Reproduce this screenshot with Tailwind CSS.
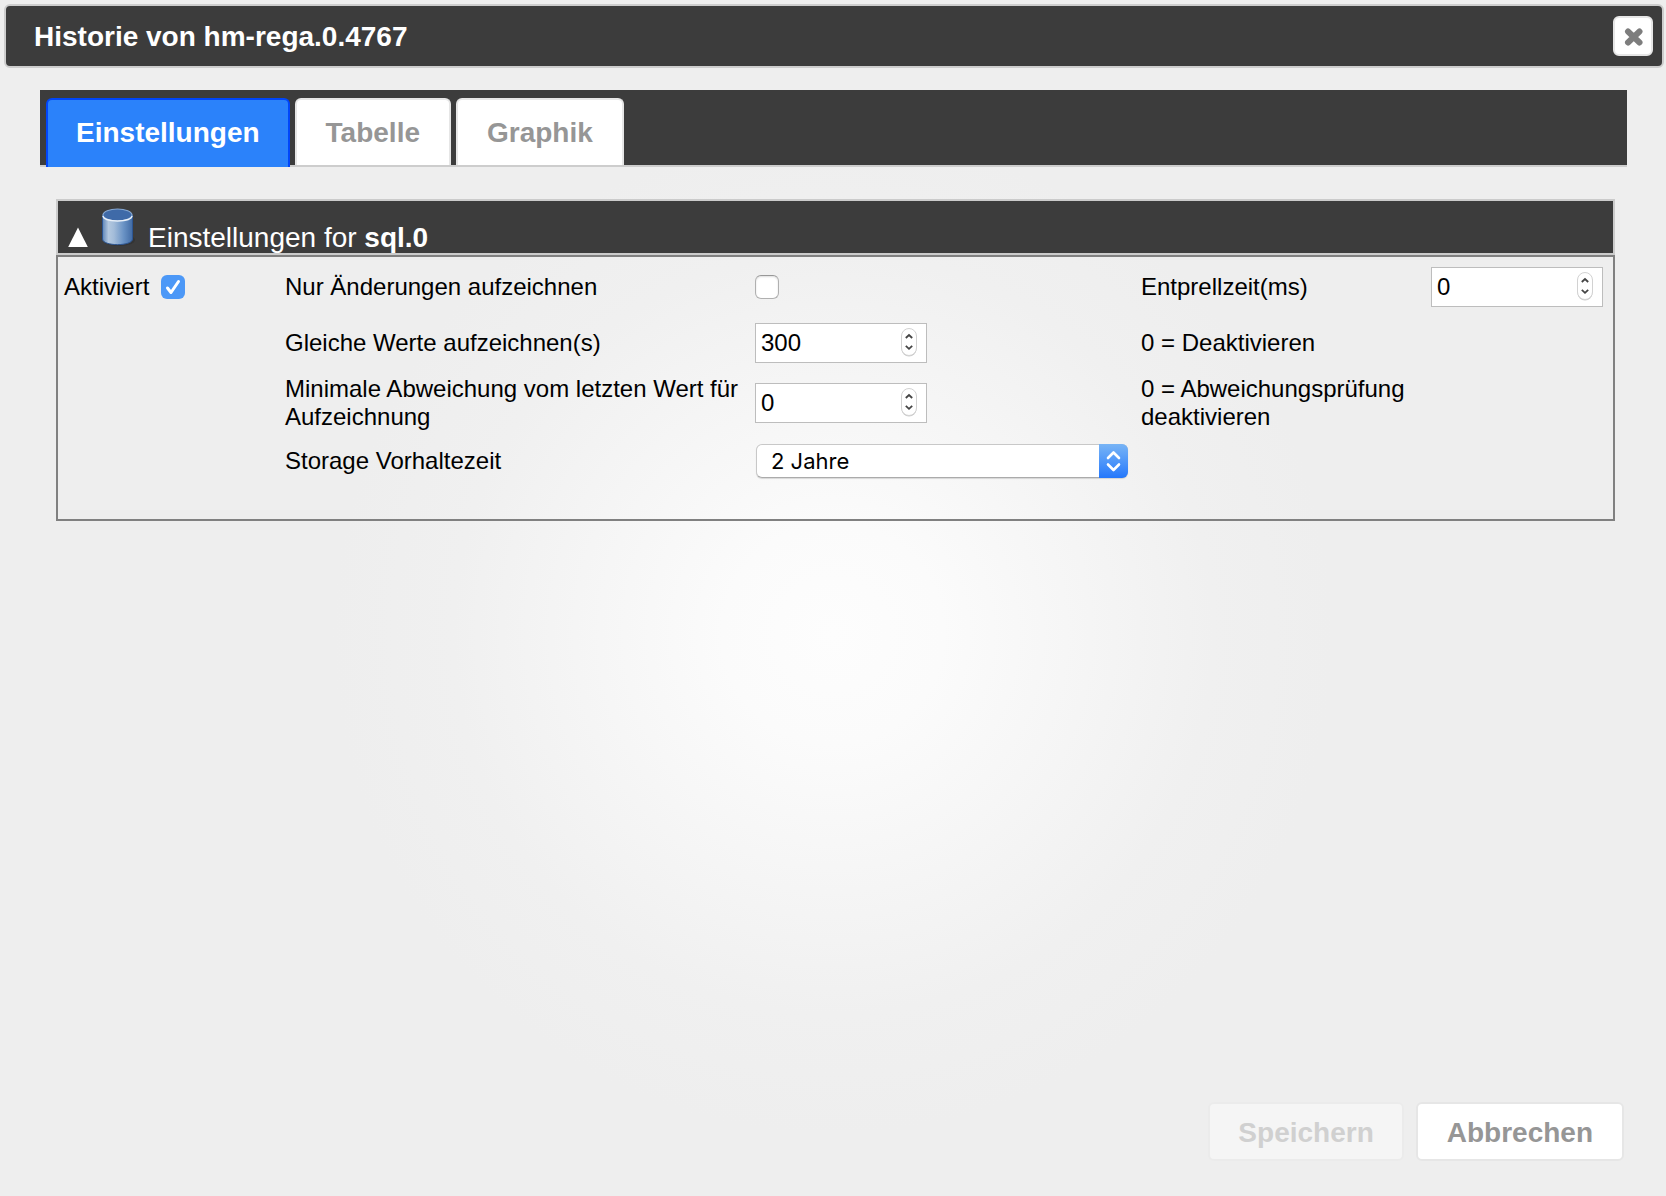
<!DOCTYPE html>
<html lang="de">
<head>
<meta charset="utf-8">
<title>Historie von hm-rega.0.4767</title>
<script src="https://cdn.jsdelivr.net/npm/@tailwindcss/browser@4"></script>
</head>
<body class="flex min-h-screen flex-col bg-[#eeeeee] bg-[radial-gradient(circle_at_50%_53%,#fdfdfd_0px,#fbfbfb_110px,#f0f0f0_380px,#eeeeee_500px)] font-['Liberation_Sans',Arial,sans-serif] text-2xl leading-7 text-black">
  <header class="mt-1 mr-0.5 ml-1 flex h-16 items-center justify-between rounded-md border-2 border-[#cdcdcd] bg-[#3c3c3c] pr-[9px] pl-7">
    <h1 class="pt-0.5 text-[28px] leading-8 font-bold text-white">Historie von hm-rega.0.4767</h1>
    <button type="button" aria-label="Schließen" class="flex size-10 items-center justify-center rounded-md border-2 border-[#e6e6e6] bg-white">
      <svg class="size-5" viewBox="0 0 20 20" fill="none" stroke="#7d7d7d" stroke-width="6" stroke-linecap="round"><path d="M5 5.500 L16.500 16.500 M16.500 5.500 L5 16.500"/></svg>
    </button>
  </header>

  <main class="mt-[22px] mr-[39px] ml-10">
    <nav class="flex h-[77px] items-start gap-[5px] border-b-2 border-[#cdcdcd] bg-[#3c3c3c] pt-2 pl-1.5 text-[28px] leading-8 font-bold">
      <a href="#einstellungen" class="flex h-[69px] items-center rounded-t-md border-2 border-b-0 border-[#0046fa] bg-[#2b82fa] px-7 pb-0.5 text-white">Einstellungen</a>
      <a href="#tabelle" class="flex h-[67px] items-center rounded-t-md border-2 border-b-0 border-[#e6e6e6] bg-white px-[29px] text-[#969696]">Tabelle</a>
      <a href="#graphik" class="flex h-[67px] items-center rounded-t-md border-2 border-b-0 border-[#e6e6e6] bg-white px-[29px] text-[#969696]">Graphik</a>
    </nav>

    <section id="einstellungen" class="mt-8 mr-3 ml-4">
      <h2 class="h-14 border-2 border-[#cbcbcb] bg-[#3c3c3c] text-[28px] leading-[30px] text-white">
        <button type="button" class="flex h-full w-full items-end pl-2.5 text-left">
          <svg class="mb-1.5 h-5 w-5" viewBox="0 0 20 20" fill="#fff"><path d="M10 0.5 L19.8 20 H0.2 Z"/></svg>
          <svg class="mb-1.5 ml-3 h-10 w-9" viewBox="0 0 36 40">
            <defs>
              <linearGradient id="side" x1="0" x2="1"><stop offset="0" stop-color="#5f86b8"/><stop offset=".2" stop-color="#b3c8df"/><stop offset=".38" stop-color="#a3bcd9"/><stop offset=".7" stop-color="#6a93c5"/><stop offset="1" stop-color="#416ba5"/></linearGradient>
            </defs>
            <ellipse cx="19" cy="33" rx="16" ry="6" fill="#2b2b2b" opacity=".5"/>
            <path d="M2.500 8.500 V32 C2.500 39.500 32.500 39.500 32.500 32 V8.500Z" fill="url(#side)" stroke="#2d5692"/>
            <ellipse cx="17.500" cy="8" rx="14.500" ry="6" fill="#3f6aa8" stroke="#86a8d4" stroke-width="1.200"/>
            <path d="M3 9 C4 15.500 31 15.500 32 9" fill="none" stroke="#e9f0f8" stroke-width="1.500"/>
          </svg>
          <span class="ml-3">Einstellungen for <b>sql.0</b></span>
        </button>
      </h2>

      <form class="grid grid-cols-[221fr_470fr_386fr_290fr_172px] grid-rows-[56px_56px_64px_52px] items-center border-2 border-[#808080] pt-0.5 pr-2.5 pb-8 pl-1.5">
        <div class="flex items-center">
          <label for="enabled">Aktiviert</label>
          <span class="relative ml-3 size-6">
            <input id="enabled" type="checkbox" checked class="block size-6 appearance-none rounded-md bg-[#4c98f7]">
            <svg class="pointer-events-none absolute inset-0 size-6" viewBox="0 0 24 24" fill="none" stroke="#fff" stroke-width="3" stroke-linecap="round" stroke-linejoin="round"><path d="M6.500 13 L10 17.500 L17.500 6.500"/></svg>
          </span>
        </div>
        <label for="changes">Nur Änderungen aufzeichnen</label>
        <input id="changes" type="checkbox" class="size-6 appearance-none rounded-md border border-[#b0b0b0] border-t-[#989898] bg-white shadow-[inset_0_1px_2px_#0002]">
        <label for="debounce">Entprellzeit(ms)</label>
        <div class="relative w-[172px]">
          <input id="debounce" type="number" value="0" class="block h-10 w-full border border-[#bdbdbd] bg-white pl-[5px] [appearance:textfield]">
          <svg class="pointer-events-none absolute top-1 right-2 h-8 w-5" viewBox="0 0 20 32" fill="none"><rect x="2.500" y="2.500" width="15" height="27" rx="7.500" fill="#c9c9c9"/><rect x="2.500" y="1.500" width="15" height="27" rx="7.500" fill="#fff" stroke="#d2d2d2"/><path d="M6.800 11 L10 8 L13.200 11 M6.800 18.800 L10 21.800 L13.200 18.800" stroke="#444" stroke-width="1.800"/></svg>
        </div>

        <label for="relog" class="col-start-2">Gleiche Werte aufzeichnen(s)</label>
        <div class="relative w-[172px]">
          <input id="relog" type="number" value="300" class="block h-10 w-full border border-[#bdbdbd] bg-white pl-[5px] [appearance:textfield]">
          <svg class="pointer-events-none absolute top-1 right-2 h-8 w-5" viewBox="0 0 20 32" fill="none"><rect x="2.500" y="2.500" width="15" height="27" rx="7.500" fill="#c9c9c9"/><rect x="2.500" y="1.500" width="15" height="27" rx="7.500" fill="#fff" stroke="#d2d2d2"/><path d="M6.800 11 L10 8 L13.200 11 M6.800 18.800 L10 21.800 L13.200 18.800" stroke="#444" stroke-width="1.800"/></svg>
        </div>
        <p>0 = Deaktivieren</p>

        <label for="delta" class="col-start-2">Minimale Abweichung vom letzten Wert für Aufzeichnung</label>
        <div class="relative w-[172px]">
          <input id="delta" type="number" value="0" class="block h-10 w-full border border-[#bdbdbd] bg-white pl-[5px] [appearance:textfield]">
          <svg class="pointer-events-none absolute top-1 right-2 h-8 w-5" viewBox="0 0 20 32" fill="none"><rect x="2.500" y="2.500" width="15" height="27" rx="7.500" fill="#c9c9c9"/><rect x="2.500" y="1.500" width="15" height="27" rx="7.500" fill="#fff" stroke="#d2d2d2"/><path d="M6.800 11 L10 8 L13.200 11 M6.800 18.800 L10 21.800 L13.200 18.800" stroke="#444" stroke-width="1.800"/></svg>
        </div>
        <p>0 = Abweichungsprüfung deaktivieren</p>

        <label for="retention" class="col-start-2">Storage Vorhaltezeit</label>
        <div class="relative ml-px w-[372px]">
          <select id="retention" class="block h-[34px] w-full appearance-none rounded-md border border-[#c8c8c8] border-b-[#ababab] bg-white pl-3.5 font-['Inter',sans-serif] text-[22px] leading-7 shadow-[0_1px_1px_#0002]">
            <option>2 Jahre</option>
          </select>
          <svg class="pointer-events-none absolute top-0 right-0 h-[34px] w-[29px] rounded-r-md bg-linear-to-b from-[#78b4f5] to-[#2377fb]" viewBox="0 0 29 34" fill="none" stroke="#fff" stroke-width="2.600" stroke-linecap="round" stroke-linejoin="round"><path d="M9 14 L14.500 8.500 L20 14 M9 20.500 L14.500 26 L20 20.500"/></svg>
        </div>
      </form>
    </section>
  </main>

  <footer class="mt-auto mr-[42px] mb-[35px] flex justify-end gap-3 text-[28px] leading-8 font-bold">
    <button type="button" disabled class="h-[59px] rounded-md border-2 border-[#ebebeb] bg-[#f5f5f5] px-7 pt-0.5 text-[#d0d0d0]">Speichern</button>
    <button type="button" class="h-[59px] rounded-md border-2 border-[#e6e6e6] bg-white px-[29px] pt-0.5 text-[#969696]">Abbrechen</button>
  </footer>
</body>
</html>
